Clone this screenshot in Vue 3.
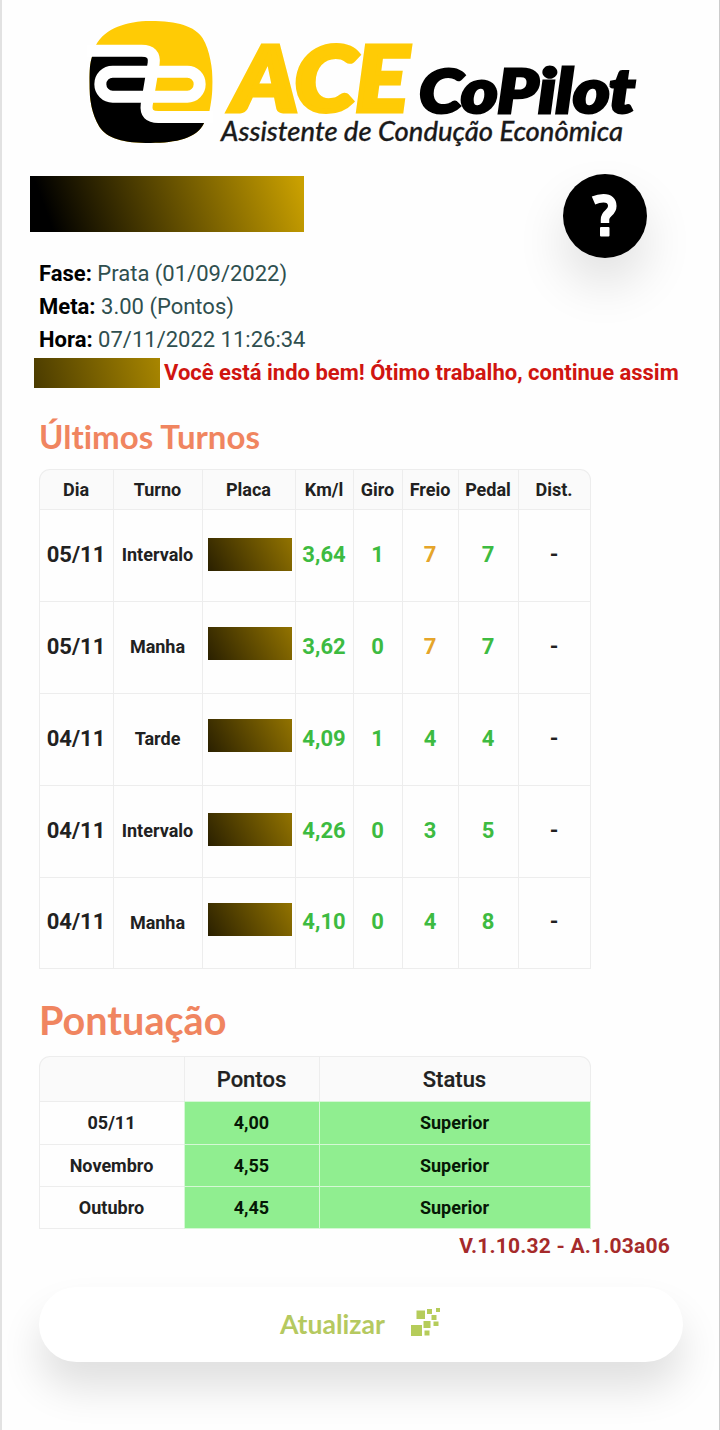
<script setup>
import { ref } from 'vue'

const headers = ['Dia', 'Turno', 'Placa', 'Km/l', 'Giro', 'Freio', 'Pedal', 'Dist.']

const turnos = ref([
  { dia: '05/11', turno: 'Intervalo', kml: '3,64', giro: 1, freio: 7, pedal: 7, alerta: true, top: 28 },
  { dia: '05/11', turno: 'Manha', kml: '3,62', giro: 0, freio: 7, pedal: 7, alerta: true, top: 25 },
  { dia: '04/11', turno: 'Tarde', kml: '4,09', giro: 1, freio: 4, pedal: 4, alerta: false, top: 25 },
  { dia: '04/11', turno: 'Intervalo', kml: '4,26', giro: 0, freio: 3, pedal: 5, alerta: false, top: 27 },
  { dia: '04/11', turno: 'Manha', kml: '4,10', giro: 0, freio: 4, pedal: 8, alerta: false, top: 25 },
])

const pontuacao = ref([
  { periodo: '05/11', pontos: '4,00', status: 'Superior' },
  { periodo: 'Novembro', pontos: '4,55', status: 'Superior' },
  { periodo: 'Outubro', pontos: '4,45', status: 'Superior' },
])
</script>

<template>
  <div class="page">
    <svg class="logo" width="560" height="140" viewBox="80 15 560 140">
      <defs>
        <clipPath id="badge">
          <path d="M48 105C75 55 140 33 212 33C290 33 345 48 368 85C390 120 398 180 398 215C398 250 393 280 388 305L372 340C350 385 290 399 212 399C130 399 80 385 58 350C35 310 28 270 28 215C28 180 30 160 36 140Z" />
        </clipPath>
      </defs>
      <g transform="translate(80 10) scale(.33333)">
        <g clip-path="url(#badge)">
          <rect width="420" height="420" fill="#ffcb05" />
          <path d="M0 122H185Q222 122 222 160L205 285Q200 321 235 321H420V420H0Z" fill="#000" />
        </g>
        <g fill="none" stroke="#fff" stroke-width="36">
          <path d="M20 122H185Q226 122 221 160L200 285Q195 321 235 321H400" />
          <path d="M215 185H98a37 37.500 0 0 0 0 75H205" />
          <path d="M218 185H322a37 37.500 0 0 1 0 75H210" />
        </g>
      </g>
      <text class="logo-ace" x="233" y="111" textLength="175" lengthAdjust="spacingAndGlyphs">ACE</text>
      <text class="logo-copilot" x="419" y="112.500" textLength="216" lengthAdjust="spacingAndGlyphs">CoPilot</text>
      <text class="logo-tag" x="221" y="141" textLength="402" lengthAdjust="spacingAndGlyphs">Assistente de Condução Econômica</text>
    </svg>

    <div class="top">
      <div class="user-name"></div>
      <button class="help">
        <svg width="30" height="44" viewBox="0 0 30 44">
          <path d="M3.500 6.500Q8.500 4.300 13.500 4.300C19.500 4.300 22.300 7.200 22.300 12C22.300 19.500 15 18.500 15 25.500V29" fill="none" stroke="#fff" stroke-width="8.500" />
          <rect x="10" y="33" width="9.500" height="9.500" rx="1" fill="#fff" />
        </svg>
      </button>
    </div>

    <div class="info">
      <p><b>Fase:</b> <span class="fase">Prata (01/09/2022)</span></p>
      <p><b>Meta:</b> <span class="meta">3.00 (Pontos)</span></p>
      <p><b>Hora:</b> <span class="hora">07/11/2022 11:26:34</span></p>
    </div>
    <div class="message">
      <span class="message-name"></span>
      <span class="message-text">Você está indo bem! Ótimo trabalho, continue assim</span>
    </div>

    <h2 class="title-turnos">Últimos Turnos</h2>
    <table class="turnos">
      <colgroup>
        <col v-for="(h, i) in headers" :key="h" :class="'c' + i" />
      </colgroup>
      <thead>
        <tr>
          <th v-for="h in headers" :key="h">{{ h }}</th>
        </tr>
      </thead>
      <tbody>
        <tr v-for="(t, i) in turnos" :key="i">
          <td class="num">{{ t.dia }}</td>
          <td>{{ t.turno }}</td>
          <td class="placa"><div class="plate" :style="{ marginTop: t.top + 'px' }"></div></td>
          <td class="num good">{{ t.kml }}</td>
          <td class="num good">{{ t.giro }}</td>
          <td class="num" :class="t.alerta ? 'warn' : 'good'">{{ t.freio }}</td>
          <td class="num good">{{ t.pedal }}</td>
          <td class="num">-</td>
        </tr>
      </tbody>
    </table>

    <h2 class="title-pontos">Pontuação</h2>
    <table class="pontos">
      <colgroup>
        <col class="p0" />
        <col class="p1" />
        <col class="p2" />
      </colgroup>
      <thead>
        <tr>
          <th></th>
          <th>Pontos</th>
          <th>Status</th>
        </tr>
      </thead>
      <tbody>
        <tr v-for="p in pontuacao" :key="p.periodo">
          <td>{{ p.periodo }}</td>
          <td class="superior">{{ p.pontos }}</td>
          <td class="superior">{{ p.status }}</td>
        </tr>
      </tbody>
    </table>

    <div class="version">V.1.10.32 - A.1.03a06</div>

    <button class="update">
      <span>Atualizar</span>
      <svg width="32" height="30" viewBox="0 0 32 30" fill="#b5cc5a">
        <rect x="1" y="17" width="11" height="11" />
        <rect x="6.500" y="2.500" width="8.500" height="8.500" />
        <rect x="13.500" y="13" width="7" height="7" />
        <rect x="17" y="1" width="5" height="5" />
        <rect x="21.500" y="7" width="5" height="5" />
        <rect x="26" y="0" width="4" height="4" />
        <rect x="23.500" y="13.500" width="5" height="4.500" />
        <rect x="14.500" y="22.500" width="5" height="5" />
      </svg>
    </button>
  </div>
</template>

<style>
body {
  margin: 0;
  background: #fefefe;
}
</style>

<style scoped>
.page {
  box-sizing: border-box;
  height: 1430px;
  overflow: hidden;
  padding: 15px 0 0 37px;
  border-left: 2px solid #e2e2e2;
  border-right: 1px solid #ccc;
  background: #fefefe;
  font-family: Roboto, sans-serif;
  color: #212121;
}

.logo {
  display: block;
  margin-left: 41px;
}

.logo text {
  font-family: Lato, sans-serif;
  font-style: italic;
}

.logo .logo-ace {
  font-size: 89px;
  font-weight: 900;
  fill: #ffcb05;
  stroke: #ffcb05;
  stroke-width: 5px;
}

.logo .logo-copilot {
  font-size: 61px;
  font-weight: 900;
  fill: #000;
  stroke: #000;
  stroke-width: 3px;
}

.logo .logo-tag {
  font-size: 27.5px;
  font-weight: 500;
  fill: #1a1a1a;
  stroke: #1a1a1a;
  stroke-width: 0.3px;
}

.top {
  display: flex;
  justify-content: space-between;
  align-items: flex-start;
  height: 84px;
  margin: 19px 72px 0 -9px;
}

.user-name {
  width: 274px;
  height: 56px;
  margin-top: 2px;
  background: linear-gradient(70deg, #000 8%, #c9a000 98%);
}

.help {
  display: flex;
  align-items: center;
  justify-content: center;
  width: 84px;
  height: 84px;
  padding: 0;
  border: none;
  border-radius: 50%;
  background: #000;
  box-shadow: 0 26px 50px rgba(0, 0, 0, 0.12);
}

.info {
  margin-top: -1px;
}

.info p {
  margin: 0;
  font-size: 22px;
  line-height: 33px;
  color: #2f4f4f;
}

.info b {
  color: #000;
}

.message {
  display: flex;
  align-items: center;
  gap: 4px;
  height: 30px;
  margin: 2px 0 0 -5px;
  white-space: nowrap;
}

.message-name {
  width: 126px;
  height: 30px;
  background: linear-gradient(75deg, #4a3b00, #a88600);
}

.message-text {
  font-size: 22px;
  font-weight: 700;
  line-height: 28px;
  color: #d01510;
}

h2 {
  margin: 0;
  font-family: Lato, sans-serif;
  font-weight: 700;
  font-variant-ligatures: none;
  color: #f08560;
}

.title-turnos {
  height: 81px;
  font-size: 33px;
  line-height: 97px;
}

.title-pontos {
  height: 87px;
  font-size: 39.6px;
  line-height: 102px;
}

table {
  width: 552px;
  table-layout: fixed;
  border-collapse: separate;
  border-spacing: 0;
  text-align: center;
}

th,
td {
  box-sizing: border-box;
  padding: 0 1px 0 0;
  border-left: 1px solid #ededed;
  border-top: 1px solid #ededed;
  font-size: 18px;
  font-weight: 700;
}

th {
  background: #fafafa;
}

th:first-child {
  border-top-left-radius: 11px;
}

th:last-child {
  border-top-right-radius: 11px;
}

th:last-child,
td:last-child {
  border-right: 1px solid #ededed;
}

tbody tr:last-child td {
  border-bottom: 1px solid #ededed;
}

.turnos th {
  height: 40px;
}

.turnos td {
  height: 92px;
  padding-bottom: 2px;
}

.c0 { width: 74px; }
.c1 { width: 89px; }
.c2 { width: 93px; }
.c3 { width: 58px; }
.c4 { width: 49px; }
.c5 { width: 56px; }
.c6 { width: 60px; }
.c7 { width: 73px; }

.turnos .num {
  font-size: 22px;
  padding-bottom: 3px;
}

.turnos .good {
  color: #3dbb41;
}

.turnos .warn {
  color: #e5a52a;
}

.turnos .placa {
  vertical-align: top;
}

.plate {
  width: 84px;
  height: 33px;
  margin-left: 5px;
  background: linear-gradient(60deg, #2a2000, #927300);
}

.p0 { width: 145px; }
.p1 { width: 135px; }
.p2 { width: 272px; }

.pontos th {
  height: 45px;
  font-size: 22px;
  font-weight: 500;
  -webkit-text-stroke: 0.2px #212121;
}

.pontos td {
  height: 42.6px;
}

.pontos .superior {
  background: #90ee90;
  border-color: #d5f8d5;
  color: #061806;
}

.version {
  height: 58px;
  padding-right: 49px;
  font-size: 21px;
  font-weight: 700;
  line-height: 35px;
  letter-spacing: 0.2px;
  text-align: right;
  color: #a52a2a;
}

.update {
  display: flex;
  align-items: center;
  justify-content: center;
  gap: 25px;
  width: 644px;
  height: 75px;
  padding: 0;
  border: none;
  border-radius: 38px;
  background: #fff;
  box-shadow: 0 26px 40px rgba(0, 0, 0, 0.12);
  font-family: Lato, sans-serif;
  font-size: 26.6px;
  font-weight: 700;
  color: #b5c960;
}

.update svg {
  margin-bottom: 3px;
}
</style>
